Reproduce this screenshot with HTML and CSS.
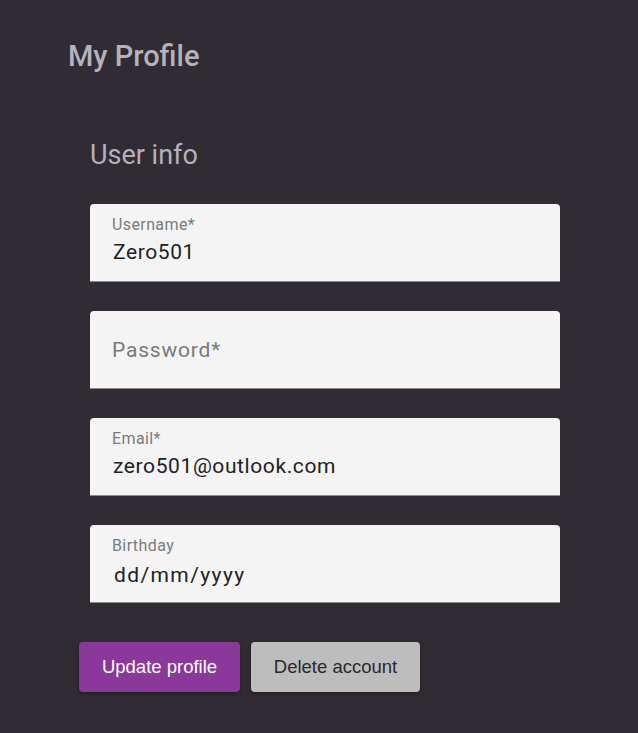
FILE: index.html
```html
<!DOCTYPE html>
<html lang="en">
<head>
<meta charset="utf-8">
<title>My Profile</title>
<link rel="stylesheet" href="styles.css">
</head>
<body>
<main class="page">
  <h1 class="title">My Profile</h1>
  <section class="card">
    <h2 class="subtitle">User info</h2>
    <div class="fields">
      <div class="field">
        <span class="label">Username*</span>
        <span class="value">Zero501</span>
      </div>
      <div class="field field-empty">
        <span class="placeholder">Password*</span>
      </div>
      <div class="field">
        <span class="label">Email*</span>
        <span class="value">zero501@outlook.com</span>
      </div>
      <div class="field">
        <span class="label">Birthday</span>
        <span class="value value-date">dd/mm/yyyy</span>
      </div>
    </div>
  </section>
  <div class="actions">
    <button class="btn btn-primary" type="button">Update profile</button>
    <button class="btn btn-secondary" type="button">Delete account</button>
  </div>
</main>
</body>
</html>
```

FILE: styles.css
```css
html, body {
  margin: 0;
  padding: 0;
  background: #312c33;
  height: 100%;
}

body {
  font-family: Roboto, "Liberation Sans", sans-serif;
}

.page {
  padding: 38px 0 0 68px;
}

.title {
  margin: 0;
  font-size: 29px;
  font-weight: 500;
  line-height: 36px;
  color: #b4b3bb;
}

.card {
  padding: 0 0 0 22px;
}

.subtitle {
  margin: 0;
  padding-top: 65px;
  font-size: 27px;
  font-weight: 400;
  line-height: 32px;
  color: #b4b0ba;
}

.fields {
  margin-top: 33px;
  display: flex;
  flex-direction: column;
  gap: 29px;
  width: 470px;
}

.field {
  height: 78px;
  box-sizing: border-box;
  background: #f4f4f4;
  border-radius: 4px 4px 0 0;
  border-bottom: 1px solid #8c8c8c;
  padding: 11px 22px 0 22px;
  display: flex;
  flex-direction: column;
}

.label {
  font-size: 16px;
  line-height: 20px;
  color: #7b7b7b;
  letter-spacing: 0.4px;
}

.value {
  margin-top: 4px;
  font-size: 21px;
  line-height: 26px;
  color: #222222;
  padding-left: 1px;
  letter-spacing: 0.6px;
}

.value-date {
  padding-left: 2px;
  letter-spacing: 1.4px;
  margin-top: 6px;
}

.field-empty {
  padding-top: 0;
  justify-content: center;
}

.placeholder {
  font-size: 21px;
  line-height: 26px;
  color: #7a7a7a;
  letter-spacing: 0.8px;
}

.actions {
  margin-top: 39px;
  margin-left: 11px;
  display: flex;
  gap: 11px;
}

.btn {
  height: 50px;
  border: none;
  border-radius: 4px;
  font-family: "Liberation Sans", Arial, sans-serif;
  font-size: 18.5px;
  padding: 0;
  box-shadow: 0 2px 4px rgba(0, 0, 0, 0.35);
  cursor: pointer;
}

.btn-primary {
  background: #8a3899;
  color: #ffffff;
  width: 161px;
}

.btn-secondary {
  background: #bdbdbd;
  color: #2a2a2a;
  width: 169px;
}
```
